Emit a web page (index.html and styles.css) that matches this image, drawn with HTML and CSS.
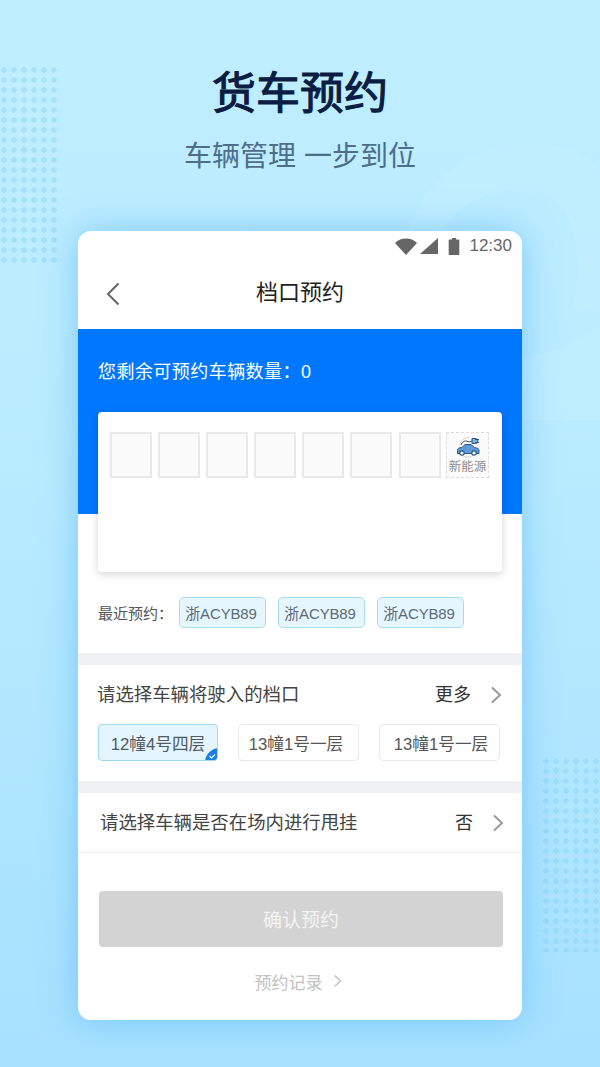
FILE: index.html
```html
<!DOCTYPE html>
<html lang="zh-CN">
<head>
<meta charset="utf-8">
<title>货车预约</title>
<link rel="stylesheet" href="styles.css">
</head>
<body>
<div class="screen">
  <svg class="rings" width="600" height="1067" viewBox="0 0 600 1067" aria-hidden="true">
    <path class="ring" d="M 408 232 A 125 125 0 0 1 530 143 C 565 143 590 155 600 172 L 600 312 L 573 307 C 590 240 565 190 530 190 C 485 190 455 205 437 238 Z"/>
    <path class="blob" d="M 522 358 Q 565 352 600 325 L 600 420 L 522 420 Z"/>
  </svg>
  <div class="dots dots-left"></div>
  <div class="dots dots-right"></div>

  <header class="hero">
    <h1 class="hero-title">货车预约</h1>
    <p class="hero-sub">车辆管理 一步到位</p>
  </header>

  <main class="card">
    <div class="status">
      <svg class="st-wifi" width="22" height="17" viewBox="0 0 22 17"><path d="M0 5C3 1.800 6.800 0.500 11 0.500s8 1.300 11 4.500L11 17z"/></svg>
      <svg class="st-signal" width="18" height="16" viewBox="0 0 18 16"><path d="M18 0v16H0z"/></svg>
      <svg class="st-batt" width="12" height="17" viewBox="0 0 12 17"><path d="M4 0h4v1.500h2.500a.8.8 0 0 1 .8.800V17H.7V2.300a.8.8 0 0 1 .8-.8H4z"/></svg>
      <span class="st-time">12:30</span>
    </div>

    <nav class="nav">
      <svg class="back" width="14" height="24" viewBox="0 0 14 24"><path d="M12.500 1.500 2 12l10.500 10.500"/></svg>
      <span class="nav-title">档口预约</span>
    </nav>

    <section class="blue">
      <p class="quota">您剩余可预约车辆数量：0</p>
      <div class="panel">
        <div class="plates">
          <span class="plate"></span><span class="plate"></span><span class="plate"></span><span class="plate"></span><span class="plate"></span><span class="plate"></span><span class="plate"></span>
          <span class="plate-new">
            <svg width="24" height="22" viewBox="0 0 24 22">
              <path class="car-arc" d="M4 7.500A9.500 9.500 0 0 1 13 1.500M20 15.500a9.500 9.500 0 0 1-14 4"/>
              <path class="car-wire" d="M5 9c1-3 4-5 7-3.500 1.500.7 2.500.2 4-.5"/>
              <path class="car-plug" d="M16 2.500h3.500a2.500 2.500 0 0 1 0 5H16zM19 3.500h4M19 6.500h4"/>
              <path class="car-body" d="M1.500 17.500v-3.300c0-1.300.7-2 2-2.300L6 11.500 8 9.300c.6-.5 1.200-.8 2-.8h4c1 0 1.700.3 2.400 1l2.100 2 3 .8c1 .3 1.500 1 1.500 2v3.200z"/>
              <circle class="car-wheel" cx="6" cy="17" r="2.200"/>
              <circle class="car-wheel" cx="18" cy="17" r="2.200"/>
            </svg>
            <span class="new-label">新能源</span>
          </span>
        </div>
      </div>
    </section>

    <section class="recent">
      <span class="recent-label">最近预约：</span>
      <span class="tag">浙ACYB89</span>
      <span class="tag">浙ACYB89</span>
      <span class="tag">浙ACYB89</span>
    </section>

    <section class="dock">
      <div class="row">
        <span class="row-label">请选择车辆将驶入的档口</span>
        <span class="row-value">更多</span>
        <svg class="chev" width="12" height="18" viewBox="0 0 12 18"><path d="M2 1.500 10 9l-8 7.500"/></svg>
      </div>
      <div class="options">
        <span class="opt opt-on">12幢4号四层
          <svg class="opt-check" width="13" height="13" viewBox="0 0 13 13"><path class="check-bg" d="M13 0v9a4 4 0 0 1-4 4H0C1 6 6 1 13 0z"/><path class="check-mark" d="M4.500 8l2 2 3.500-3.500"/></svg>
        </span>
        <span class="opt opt-mid">13幢1号一层</span>
        <span class="opt opt-last">13幢1号一层</span>
      </div>
    </section>

    <section class="drop">
      <span class="row-label">请选择车辆是否在场内进行甩挂</span>
      <span class="row-value">否</span>
      <svg class="chev" width="12" height="18" viewBox="0 0 12 18"><path d="M2 1.500 10 9l-8 7.500"/></svg>
    </section>

    <section class="actions">
      <div class="confirm">确认预约</div>
      <div class="history">预约记录
        <svg class="history-chev" width="9" height="14" viewBox="0 0 9 14"><path d="M1.500 1.500 7.500 7l-6 5.500"/></svg>
      </div>
    </section>
  </main>
</div>
</body>
</html>
```
FILE: styles.css
```css
* { box-sizing: border-box; margin: 0; padding: 0; }
html, body { width: 600px; height: 1067px; overflow: hidden; }
body { font-family: "Liberation Sans", "Noto Sans CJK SC", sans-serif; }

.screen {
  position: relative;
  width: 600px;
  height: 1067px;
  padding-top: 66px;
  overflow: hidden;
  background: linear-gradient(180deg, #bfeeff 0%, #b9ebff 45%, #a6e1ff 100%);
}
.rings { position: absolute; left: 0; top: 0; }
.ring { fill: #c8f1ff; opacity: .45; }
.blob { fill: #c4efff; opacity: .5; }

.dots {
  position: absolute;
  width: 60px;
  background-image: radial-gradient(circle at 5px 5px, rgba(130, 205, 245, .38) 0, rgba(130, 205, 245, .38) 2.5px, transparent 3px);
  background-size: 10px 10px;
}
.dots-left { left: -1px; top: 65px; height: 200px; }
.dots-right { left: 541px; top: 756px; height: 196px; }

.hero { position: relative; text-align: center; }
.hero-title { font-size: 44px; line-height: 56px; font-weight: 400; -webkit-text-stroke: 1.100px #0b1d42; color: #0b1d42; letter-spacing: 0; }
.hero-sub { margin-top: 15px; font-size: 28px; line-height: 40px; color: #4d6d8b; }

.card {
  position: relative;
  width: 444px;
  height: 789px;
  margin: 54px 0 0 78px;
  background: #fff;
  border-radius: 13px;
  overflow: hidden;
  box-shadow: 0 0 34px rgba(70, 170, 245, .5);
}

.status {
  height: 30px;
  padding: 0 10px 0 0;
  display: flex;
  align-items: center;
  justify-content: flex-end;
  color: #666;
}
.status svg { fill: #666; }
.st-wifi { margin-right: 3px; }
.st-signal { margin-right: 10px; }
.st-batt { margin-right: 9px; }
.st-time { font-size: 17px; line-height: 20px; }

.nav { height: 68px; display: flex; align-items: center; justify-content: center; position: relative; }
.back { position: absolute; left: 28px; top: 21px; fill: none; stroke: #666; stroke-width: 2; }
.nav-title { font-size: 22px; line-height: 30px; color: #222; margin-top: -5px; }

.blue { height: 185px; background: #0077ff; padding: 0 20px; }
.quota { padding-top: 31px; font-size: 18px; line-height: 24px; color: #fff; letter-spacing: .45px; }
.panel {
  margin-top: 28px;
  width: 404px;
  height: 160px;
  background: #fff;
  border-radius: 4px;
  padding: 20px 12px;
  box-shadow: 0 2px 8px rgba(0, 0, 0, .18);
  position: relative;
}
.plates { display: flex; gap: 6px; }
.plate { width: 42px; height: 46px; background: #fbfbfb; border: 2px solid #e9e9e9; }
.plate:nth-child(7) { margin-left: 1px; margin-right: -1px; }
.plate-new {
  width: 43px;
  height: 46px;
  border: 1.500px dashed #dcdcdc;
  background: #fbfbfb;
  display: flex;
  flex-direction: column;
  align-items: center;
  padding-top: 3px;
}
.new-label { font-size: 12.500px; line-height: 16px; color: #8e8e8e; white-space: nowrap; margin-top: 1px; }
.car-arc { fill: none; stroke: #b9c4cc; stroke-width: .7; }
.car-wire { fill: none; stroke: #33557a; stroke-width: 1; }
.car-plug { fill: #7fb2de; stroke: #33557a; stroke-width: 1; }
.car-body { fill: #5e9bd8; stroke: #2f5785; stroke-width: 1; }
.car-wheel { fill: #fff; stroke: #2f5785; stroke-width: 1.200; }

.recent {
  margin-top: 83px;
  padding-left: 20px;
  height: 31px;
  display: flex;
  align-items: center;
}
.recent-label { width: 81px; font-size: 15px; color: #555; white-space: nowrap; margin-top: -1px; }
.tag {
  width: 87px;
  height: 31px;
  margin-right: 12px;
  padding-right: 3px;
  display: flex;
  align-items: center;
  justify-content: center;
  font-size: 15px;
  letter-spacing: -.15px;
  color: #5d6b78;
  background: #e6f6fe;
  border: 1.500px solid #a6dcf3;
  border-radius: 5px;
}

.dock { margin-top: 25px; border-top: 12px solid #eff1f5; border-bottom: 12px solid #eff1f5; height: 140px; padding: 0 20px; }
.row { height: 59px; display: flex; align-items: center; }
.row-label { flex: 1; font-size: 18.400px; line-height: 26px; color: #444; white-space: nowrap; margin-left: -1px; }
.row-value { font-size: 18px; line-height: 26px; color: #333; }
.chev { margin-left: 19px; fill: none; stroke: #9a9a9a; stroke-width: 2; }

.options { display: flex; gap: 20px; }
.opt {
  position: relative;
  width: 121px;
  height: 37px;
  display: flex;
  align-items: center;
  justify-content: center;
  font-size: 16.700px;
  color: #555;
  background: #fff;
  border: 1px solid #e9e9e9;
  border-radius: 4px;
}
.opt-on { width: 120px; background: #e4f5fe; border: 1.500px solid #9fd8f4; color: #4d5a68; overflow: hidden; }
.opt-mid { padding-right: 5px; }
.opt-last { padding-left: 3px; }
.opt-check { position: absolute; right: -1px; bottom: -1px; }
.check-bg { fill: #1a7de8; }
.check-mark { fill: none; stroke: #fff; stroke-width: 1.200; }

.drop {
  height: 60px;
  padding: 0 18px 0 23px;
  display: flex;
  align-items: center;
  border-bottom: 1.500px solid #eeeeee;
}

.actions { padding: 38px 19px 0 21px; }
.confirm {
  height: 56px;
  padding-bottom: 2px;
  background: #d3d3d3;
  border-radius: 4px;
  display: flex;
  align-items: center;
  justify-content: center;
  font-size: 19px;
  color: #f4f4f4;
}
.history {
  margin-top: 20px;
  margin-right: 6px;
  height: 28px;
  display: flex;
  align-items: center;
  justify-content: center;
  gap: 10px;
  font-size: 17px;
  color: #c2c2c2;
}
.history-chev { fill: none; stroke: #c2c2c2; stroke-width: 1.400; }
```
